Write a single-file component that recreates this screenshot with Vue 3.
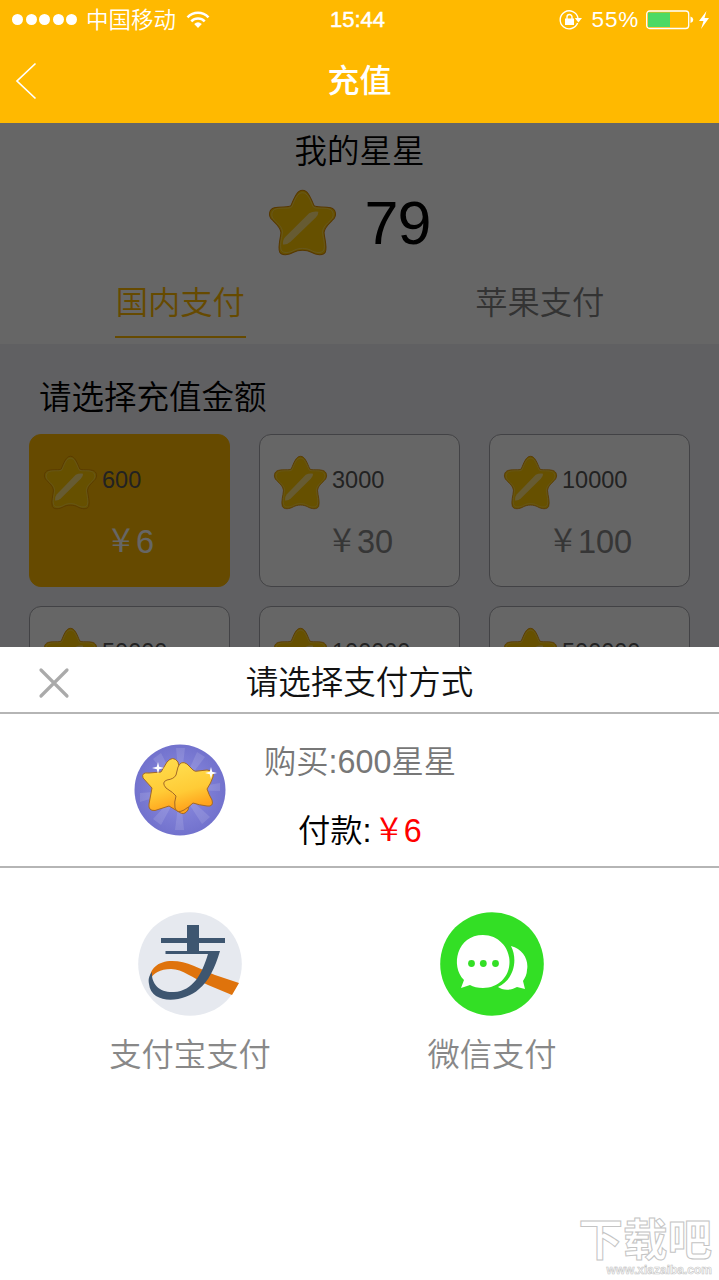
<script setup>
const packs = [
  { stars: '600', price: '6', active: true },
  { stars: '3000', price: '30' },
  { stars: '10000', price: '100' },
  { stars: '50000', price: '500' },
  { stars: '100000', price: '1000' },
  { stars: '500000', price: '5000' },
]
const starPath =
  'M100 1C117 1 125 24 135 46C143 53 165 47 185 52C201 56 205 76 191 88C178 100 166 110 165 125C166 142 175 165 169 182C163 194 141 191 127 183C112 175 88 175 73 183C59 191 37 194 31 182C25 165 34 142 35 125C34 110 22 100 9 88C-5 76 -1 56 15 52C35 47 57 53 65 46C75 24 83 1 100 1Z'
const glintPath = 'M41 160Q40 146 48 138L120 68Q132 62 148 64Q148 73 140 81L64 152Q52 162 41 160Z'
</script>

<template>
  <div class="screen">
    <header class="top">
      <div class="status">
        <div class="carrier">
          <span class="dots"><i v-for="n in 5" :key="n"></i></span>
          <span class="operator">中国移动</span>
          <svg class="wifi" viewBox="0 0 24 18">
            <path d="M1.500 6.300C7.500 .3 16.500 .3 22.500 6.300" />
            <path d="M5.300 10.300C9 6.600 15 6.600 18.700 10.300" />
            <path class="solid" d="M8.200 13Q12 9.600 15.800 13L12 17Z" />
          </svg>
        </div>
        <span class="time">15:44</span>
        <div class="power">
          <svg class="lock" viewBox="0 0 24 22">
            <path d="M18.600 14A9 9 0 1 1 19 9" />
            <path class="solid" d="M15.800 9H23L19.400 13.500Z" />
            <rect class="solid" x="6" y="9.500" width="9" height="6.500" />
            <path d="M8 10V8a2.500 2.500 0 0 1 5 0v2" />
          </svg>
          <span class="percent">55%</span>
          <svg class="battery" viewBox="0 0 48 20">
            <rect class="shell" x=".7" y="1" width="42" height="17.500" rx="3" />
            <rect class="charge" x="2" y="2.500" width="22" height="14.500" />
            <path class="solid" d="M44.500 6.500q2.800 1 2.800 3.300t-2.800 3.300z" />
          </svg>
          <svg class="bolt" viewBox="0 0 10 18"><path d="M7.500 0L0 10H4.500L2 18L10 7H5.500Z" /></svg>
        </div>
      </div>
      <nav class="nav">
        <svg class="back" viewBox="0 0 22 38"><path d="M20.500 1.500L2 19L20.500 36.500" /></svg>
        <h1>充值</h1>
      </nav>
    </header>

    <main class="page">
      <section class="balance">
        <div class="mine">我的星星</div>
        <div class="total">
          <svg class="star big" viewBox="-1 0 202 191" preserveAspectRatio="none">
            <path class="body" :d="starPath" />
            <path class="rim" :d="starPath" transform="translate(7 7) scale(.93)" />
            <path class="glint" :d="glintPath" />
          </svg>
          <strong>79</strong>
        </div>
        <div class="tabs">
          <div class="tab on"><span>国内支付</span></div>
          <div class="tab"><span>苹果支付</span></div>
        </div>
      </section>
      <section class="amounts">
        <h2>请选择充值金额</h2>
        <div class="grid">
          <div v-for="p in packs" :key="p.stars" class="pack" :class="{ active: p.active }">
            <div class="count">
              <svg class="star" viewBox="-1 0 202 191" preserveAspectRatio="none">
                <path class="body" :d="starPath" />
                <path class="rim" :d="starPath" transform="translate(7 7) scale(.93)" />
                <path class="glint" :d="glintPath" />
              </svg>
              <span>{{ p.stars }}</span>
            </div>
            <div class="price"><span class="yen">¥</span>{{ p.price }}</div>
          </div>
        </div>
      </section>
      <div class="mask"></div>
    </main>

    <section class="sheet">
      <div class="sheet-head">
        <svg class="close" viewBox="0 0 30 30"><path d="M2 2L28 28M28 2L2 28" /></svg>
        <span>请选择支付方式</span>
      </div>
      <div class="order">
        <svg class="badge" viewBox="0 0 92 92">
          <defs>
            <linearGradient id="gold" x1="0" y1="0" x2="0.300" y2="1">
              <stop offset="0" stop-color="#ffe052" />
              <stop offset=".65" stop-color="#ffcb36" />
              <stop offset="1" stop-color="#ffa31c" />
            </linearGradient>
            <radialGradient id="violet">
              <stop offset="0" stop-color="#8f8fe2" />
              <stop offset="1" stop-color="#7272cd" />
            </radialGradient>
          </defs>
          <circle cx="46" cy="46" r="45.500" fill="url(#violet)" />
          <path class="rays" d="M46 46L42 4H51ZM46 46L63 8L71 13ZM46 46L19 15L27 9ZM46 46L86 39V47ZM46 46L76 73L68 80ZM46 46L50 86H41ZM46 46L27 81L19 75ZM46 46L6 58V49Z" />
          <path class="gold" d="M27 28L33 18Q39 11 44 18L46 27L60 40L54 66Q50 72 45 68L35 62L21 66.500Q14 67 15 60L18 44L9 34Q7 28 15 29Z" />
          <path class="gold" d="M42 31Q43 27 44 23Q47 16 53 20L59 26Q61 28 64 27L73 26Q81 27 79 33Q77 39 73 45Q75 51 78 56Q80 63 73 62Q65 61 59 59Q55 63 50 66Q43 70 41 64Q40 58 42 52Q40 49 32 44Q27 38 33 36Q40 35 42 31Z" />
          <path class="spark" d="M24 18L25.200 22.800L30 24L25.200 25.200L24 30L22.800 25.200L18 24L22.800 22.800ZM77 23L78.200 27.800L83 29L78.200 30.200L77 35L75.800 30.200L71 29L75.800 27.800Z" />
        </svg>
        <div class="detail">
          <div class="item">购买:600星星</div>
          <div class="pay">付款:<em><span class="yen">¥</span>6</em></div>
        </div>
      </div>
      <div class="methods">
        <div class="method">
          <svg viewBox="0 0 104 104">
            <circle cx="52" cy="52" r="51.800" fill="#e6e9ef" />
            <path fill="#df730c" d="M12 68C11 57 20 49 34 49C49 49 62 57 77 63L101 71L94 83L70 73C54 66 45 57 33 57C22 57 15 61 12 68Z" />
            <path fill="#3e5670" d="M49 13H61V26H87V31H61V39H82C77 56 70 70 61 77C46 91 13 93 11 72C10 67 11 64 14 60C13 73 23 81 36 80C55 79 64 62 70 42H27.500V39H49V31H23V26H49Z" />
          </svg>
          <span>支付宝支付</span>
        </div>
        <div class="method">
          <svg viewBox="0 0 104 104">
            <circle cx="52" cy="52" r="51.800" fill="#33df25" />
            <path fill="#fff" d="M71 34C83 37 89 48 87 58C87 62 85 66 83 69L85 77L77 75C70 79 62 78 58 75C72 69 79 50 71 34Z" />
            <path fill="#fff" d="M43 23C58 23 69.500 35 69.500 50S58 76 43 76C38 76 33 75 30 73L21 76L24 68C10 54 17 23 43 23Z" />
            <g fill="#33df25"><circle cx="31.500" cy="51.500" r="3.400" /><circle cx="43.300" cy="51.500" r="3.400" /><circle cx="55.500" cy="51.500" r="3.400" /></g>
          </svg>
          <span>微信支付</span>
        </div>
      </div>
      <div class="watermark">
        <b>下载吧</b>
        <small>www.xiazaiba.com</small>
      </div>
    </section>
  </div>
</template>

<style>
body { margin: 0; overflow: hidden; }
</style>

<style scoped>
* { box-sizing: border-box; }
.screen {
  width: 719px; height: 1280px; overflow: hidden; position: relative;
  display: flex; flex-direction: column; background: #fff; white-space: nowrap;
  font-family: "Liberation Sans", "Noto Sans CJK SC", sans-serif; font-weight: 350;
}
svg { display: block; flex: none; overflow: visible; }
.top { height: 123px; background: #ffb900; color: #fff; flex: none; }
.status { height: 39px; display: grid; grid-template-columns: 1fr auto 1fr; align-items: center; padding: 0 10px 0 12px; }
.carrier { display: flex; align-items: center; height: 39px; }
.dots { display: flex; gap: 2.500px; }
.dots i { width: 11px; height: 11px; border-radius: 50%; background: #fff; }
.operator { font-size: 22.500px; margin-left: 9px; line-height: 39px; padding-top: 1px; }
.wifi { width: 24px; height: 18px; margin-left: 10px; fill: none; stroke: #fff; stroke-width: 2.600; }
.solid { fill: #fff; stroke: none; }
.time { font-size: 22px; font-weight: 400; -webkit-text-stroke: .5px #fff; margin-right: 6px; }
.power { display: flex; align-items: center; justify-content: flex-end; }
.lock { width: 24px; height: 22px; fill: none; stroke: #fff; stroke-width: 1.400; }
.percent { font-size: 22.500px; margin-left: 9px; letter-spacing: .8px; }
.battery { width: 48px; height: 20px; margin-left: 7px; }
.shell { fill: none; stroke: #fff; stroke-width: 1.300; }
.charge { fill: #4cd964; }
.bolt { width: 10px; height: 18px; margin-left: 5px; fill: #fff; }
.nav { height: 84px; display: grid; grid-template-columns: 1fr auto 1fr; align-items: center; padding: 0 15px; }
.back { width: 22px; height: 38px; fill: none; stroke: #fff; stroke-width: 1.700; }
h1 { margin: 0; font-size: 32px; font-weight: 500; line-height: 40px; }
.page { position: relative; height: 524px; overflow: hidden; flex: none; }
.mask { position: absolute; inset: 0; background: rgba(0, 0, 0, .6); }
.balance { height: 221px; background: #fff; }
.mine { height: 56px; line-height: 58px; text-align: center; font-size: 32.500px; }
.total { height: 86px; display: flex; align-items: center; padding-left: 269px; }
.star { width: 53px; height: 53px; }
.star.big { width: 67px; height: 65px; }
.body { fill: #ffc800; stroke: #d98a00; stroke-width: 3; }
.rim { fill: none; stroke: #ffe070; stroke-width: 3; opacity: .7; }
.glint { fill: #fff; opacity: .5; }
.total strong { font-size: 61px; font-weight: 400; letter-spacing: -1px; margin-left: 28.500px; line-height: 86px; padding-top: 2px; }
.tabs { display: flex; height: 79px; }
.tab { flex: 1; display: flex; justify-content: center; font-size: 32.300px; color: #808080; padding-left: 1px; }
.tab span { height: 73px; line-height: 76px; padding: 0 1px; }
.tab.on { color: #ffb900; }
.tab.on span { border-bottom: 2px solid #ffb900; }
.amounts { height: 500px; background: #efeff4; padding: 0 29px; }
h2 { margin: 0; font-size: 32.500px; font-weight: 350; height: 90px; line-height: 108px; padding-left: 10px; }
.grid { display: grid; grid-template-columns: repeat(3, 201px); grid-auto-rows: 153px; gap: 19px 29px; }
.pack { border: 1px solid #a6a6ac; border-radius: 12px; background: #fff; color: #555; }
.count { display: flex; align-items: center; padding: 20px 0 0 14px; font-size: 23.500px; height: 74px; }
.count span { margin: -3px 0 0 5px; }
.price { height: 66px; line-height: 67px; text-align: center; font-size: 32.500px; color: #888; padding-left: 7px; }
.yen { display: inline-block; font: 350 33px/1 "Noto Sans CJK SC", sans-serif; margin-right: 6px; transform: scaleX(1.1); }
.price .yen, .pay .yen { vertical-align: 1px; }
.pack.active { background: #ffb900; border-color: #ffb900; }
.pack.active .price { color: #fff; }
.sheet { position: relative; flex: 1; background: #fff; }
.sheet-head { height: 67px; border-bottom: 2px solid #b5b5b5; display: grid; grid-template-columns: 1fr auto 1fr; align-items: center; padding: 6px 39px 0; font-size: 32.500px; line-height: 50px; }
.sheet-head span { padding-top: 1px; line-height: 50px; color: #111; }
.close { width: 30px; height: 30px; fill: none; stroke: #aaa; stroke-width: 3.200; stroke-linecap: round; }
.order { height: 154px; border-bottom: 2px solid #b5b5b5; display: flex; padding-left: 134px; }
.badge { width: 92px; height: 92px; margin-top: 30px; }
.rays { fill: #fff; opacity: .12; }
.gold { fill: url(#gold); stroke: #a26828; stroke-width: 1; stroke-linejoin: round; }
.spark { fill: #fff; }
.detail { margin-left: 38px; font-size: 32.300px; }
.item { height: 97px; line-height: 97px; color: #777; }
.pay { height: 36px; line-height: 32px; padding-left: 34px; color: #000; }
em { font-style: normal; color: #f00; }
.pay .yen { margin-left: 8px; margin-right: 6px; }
.methods { display: flex; padding: 44px 0 0 39px; }
.method { width: 302px; display: flex; flex-direction: column; align-items: center; font-size: 32.300px; color: #888; }
.method svg { width: 104px; height: 104px; }
.method span { line-height: 48px; margin-top: 15px; }
.watermark { position: absolute; right: 7px; bottom: 3px; width: 134px; display: flex; flex-direction: column; align-items: flex-end; color: #fff; }
.watermark b { font-size: 44.500px; line-height: 46px; font-weight: 700; -webkit-text-stroke: 1px #c4c4c4; }
.watermark small { font: 700 12px/13px "Liberation Sans", sans-serif; -webkit-text-stroke: .6px #c4c4c4; }
</style>
